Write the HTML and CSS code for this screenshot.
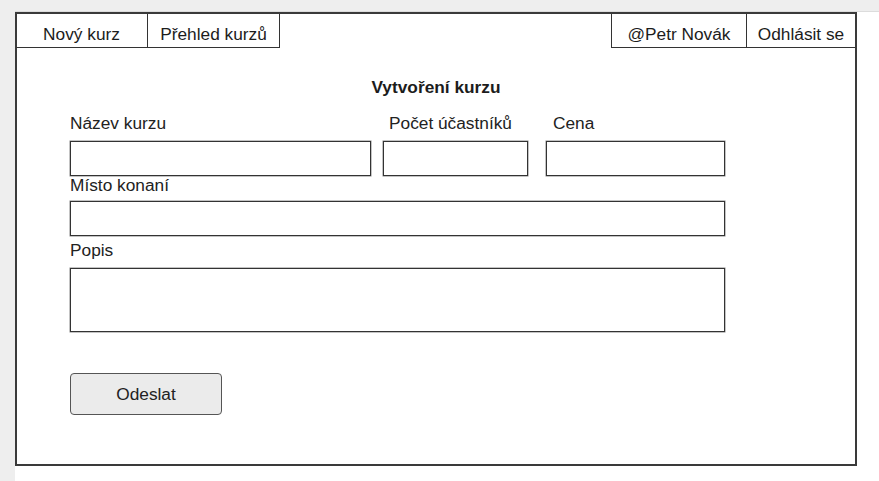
FILE: index.html
```html
<!DOCTYPE html>
<html lang="cs">
<head>
<meta charset="utf-8">
<title>Vytvoření kurzu</title>
<link rel="stylesheet" href="styles.css">
</head>
<body>
<div class="viewport">
  <div class="frame">
    <nav class="nav">
      <div class="nav-group">
        <a class="tab tab-left w-new">Nový kurz</a>
        <a class="tab tab-left w-list">Přehled kurzů</a>
      </div>
      <div class="nav-group">
        <a class="tab tab-right w-user">@Petr Novák</a>
        <a class="tab tab-right w-logout">Odhlásit se</a>
      </div>
    </nav>
    <main class="content">
      <h1 class="title">Vytvoření kurzu</h1>
      <form class="form">
        <div class="row-3">
          <div class="field field-name">
            <label class="label">Název kurzu</label>
            <input class="input" type="text">
          </div>
          <div class="field field-count">
            <label class="label label-indent">Počet účastníků</label>
            <input class="input" type="text">
          </div>
          <div class="field field-price">
            <label class="label label-indent-7">Cena</label>
            <input class="input" type="text">
          </div>
        </div>
        <label class="label label-tight">Místo konaní</label>
        <input class="input input-full" type="text">
        <label class="label label-popis">Popis</label>
        <textarea class="textarea"></textarea>
        <button class="button" type="button">Odeslat</button>
      </form>
    </main>
  </div>
</div>
</body>
</html>
```

FILE: styles.css
```css
* { box-sizing: border-box; }

html, body {
  margin: 0;
  padding: 0;
  height: 100%;
}

body {
  background: #eeeeee;
  font-family: "Liberation Sans", Arial, sans-serif;
  color: #222;
  overflow: hidden;
}

.viewport {
  margin: 11px 0 0 15px;
  background: #ffffff;
  border-top: 1px solid #dcdcdc;
  height: 470px;
}

.frame {
  width: 842px;
  height: 454px;
  border: 2px solid #3a3a3a;
  display: flex;
  flex-direction: column;
}

.nav {
  display: flex;
  justify-content: space-between;
  height: 34px;
}

.nav-group {
  display: flex;
}

.tab {
  display: flex;
  align-items: flex-end;
  justify-content: center;
  height: 34px;
  padding-bottom: 3px;
  font-size: 17.3px;
  line-height: 20px;
  color: #1c1c1c;
  border-bottom: 1px solid #333;
  text-decoration: none;
}

.tab-left { border-right: 1px solid #333; }
.tab-right { border-left: 1px solid #333; }

.w-new { width: 132px; margin-left: -1px; }
.w-list { width: 132px; }
.w-user { width: 135px; }
.w-logout { width: 109px; }

.content {
  padding: 0 0 0 53px;
}

.title {
  margin: 29px 0 0 -53px;
  text-align: center;
  font-size: 17.3px;
  line-height: 20px;
  font-weight: bold;
  color: #1c1c1c;
}

.form {
  display: flex;
  flex-direction: column;
  width: 655px;
  margin-top: 17px;
}

.row-3 {
  display: flex;
}

.field {
  display: flex;
  flex-direction: column;
}

.field-name { width: 301px; }
.field-count { width: 145px; margin-left: 12px; }
.field-price { width: 179px; margin-left: 18px; }

.label {
  font-size: 17.3px;
  line-height: 18px;
  color: #222;
  margin-bottom: 9px;
}

.label-indent { padding-left: 6px; }
.label-indent-7 { padding-left: 7px; }

.label-tight { margin-bottom: 7px; }
.label-popis { margin-top: 5px; margin-bottom: 9px; }

.input {
  display: block;
  width: 100%;
  height: 35px;
  border: 1px solid #333;
  box-shadow: 0 0 0 0.5px #888;
  border-radius: 0;
  background: #fff;
  margin: 0;
  padding: 0 6px;
  font: inherit;
  outline: none;
}

.input-full { width: 655px; }

.textarea {
  display: block;
  width: 655px;
  height: 64px;
  border: 1px solid #333;
  box-shadow: 0 0 0 0.5px #888;
  margin: 0;
  padding: 4px 6px;
  resize: none;
  font: inherit;
  outline: none;
}

.button {
  align-self: flex-start;
  margin-top: 41px;
  width: 152px;
  height: 42px;
  border: 1px solid #555;
  border-radius: 4px;
  background: #ebebeb;
  font-family: "Liberation Sans", Arial, sans-serif;
  font-size: 17.3px;
  color: #222;
  padding: 0;
}
```
